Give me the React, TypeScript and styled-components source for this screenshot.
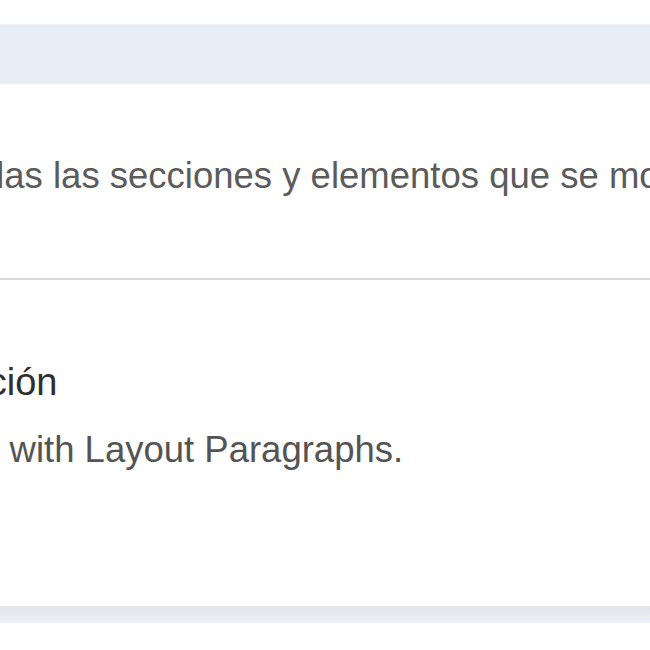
import styled, { createGlobalStyle } from "styled-components";

const GlobalStyle = createGlobalStyle`
  html, body {
    margin: 0;
    padding: 0;
    background: #ffffff;
  }
  body {
    font-family: "Liberation Sans", Arial, sans-serif;
    overflow: hidden;
  }
`;

const Viewport = styled.div`
  width: 650px;
  height: 650px;
  overflow: hidden;
  padding-top: 24px;
  box-sizing: border-box;
  background: #ffffff;
`;

const Banner = styled.div`
  height: 60px;
  background: #e7eef6;
  border-top: 1px solid #edf2f8;
  box-sizing: border-box;
`;

const Card = styled.div`
  display: flex;
  flex-direction: column;
  margin-left: -229px;
  width: 1400px;
`;

const Intro = styled.section`
  padding: 72px 0 82px;
  border-bottom: 2px solid #d9d9d9;
`;

const Lead = styled.p`
  margin: 0;
  font-size: 36.5px;
  line-height: 40px;
  color: #5b5b5b;
  white-space: nowrap;
`;

const Settings = styled.section`
  padding: 80px 0 136px;
  display: flex;
  flex-direction: column;
  gap: 26px;
`;

const Title = styled.h3<{ $indent: number }>`
  margin: 0 0 0 ${(p) => p.$indent}px;
  font-size: 38px;
  line-height: 44px;
  font-weight: 400;
  color: #2f2f2f;
  white-space: nowrap;
`;

const Hint = styled.p<{ $indent: number }>`
  margin: 0 0 0 ${(p) => p.$indent}px;
  font-size: 36.5px;
  line-height: 40px;
  color: #545454;
  white-space: nowrap;
`;

const Footer = styled.div`
  height: 17px;
  background: linear-gradient(#e3e3e9, #eef2f8);
  border-top: 1px solid #ececec;
  box-sizing: border-box;
`;

export default function App() {
  return (
    <>
      <GlobalStyle />
      <Viewport>
        <Banner />
        <Card>
          <Intro>
            <Lead>
              Administra todas las secciones y elementos que se mostrarán en la
              página.
            </Lead>
          </Intro>
          <Settings>
            <Title $indent={52}>Configuración</Title>
            <Hint $indent={-9}>Build a section with Layout Paragraphs.</Hint>
          </Settings>
        </Card>
        <Footer />
      </Viewport>
    </>
  );
}
